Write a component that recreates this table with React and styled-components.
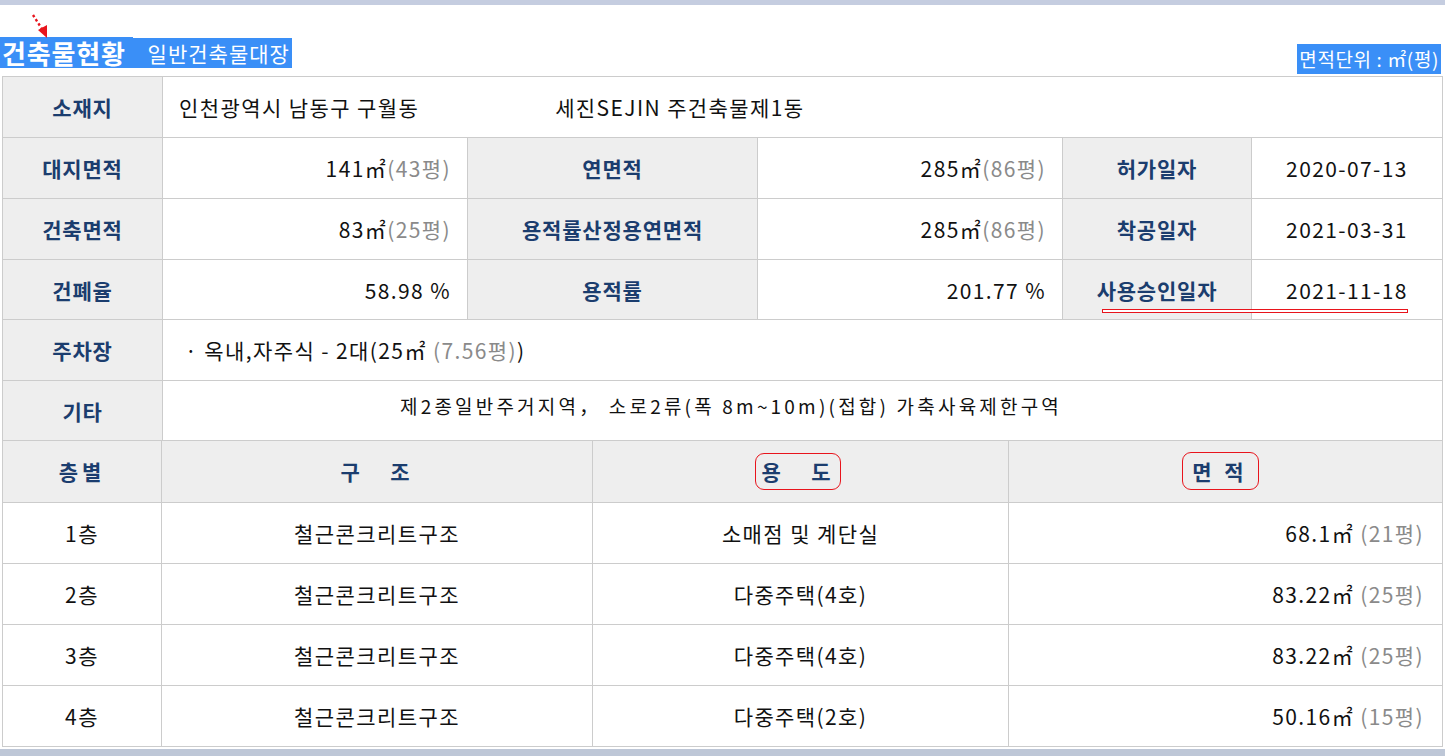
import styled, { createGlobalStyle } from 'styled-components';

const GlobalStyle = createGlobalStyle`
    html, body {
        margin: 0;
        padding: 0;
        background: #fff;
    }
    body {
        font-family: 'Noto Sans CJK KR', 'Noto Sans', sans-serif;
        color: #111;
    }
`

const info = [
    ['대지면적', ['141㎡', '(43평)'], '연면적', ['285㎡', '(86평)'], '허가일자', '2020-07-13', 61],
    ['건축면적', ['83㎡', '(25평)'], '용적률산정용연면적', ['285㎡', '(86평)'], '착공일자', '2021-03-31', 61],
    ['건폐율', ['58.98 %', ''], '용적률', ['201.77 %', ''], '사용승인일자', '2021-11-18', 60],
]

const floors = [
    ['1층', '철근콘크리트구조', '소매점 및 계단실', '68.1㎡', '(21평)'],
    ['2층', '철근콘크리트구조', '다중주택(4호)', '83.22㎡', '(25평)'],
    ['3층', '철근콘크리트구조', '다중주택(4호)', '83.22㎡', '(25평)'],
    ['4층', '철근콘크리트구조', '다중주택(2호)', '50.16㎡', '(15평)'],
]

export default function App() {
    return (
        <Page>
            <GlobalStyle />
            <TopBar />
            <Header>
                <TitleWrap>
                    <Arrow width="20" height="28" viewBox="0 0 20 28">
                        <line x1="3" y1="2" x2="12" y2="16" stroke="#e8141c" strokeWidth="2.4" strokeDasharray="2.5 2.5" />
                        <polygon points="8,17 17,12 17,25" fill="#e8141c" />
                    </Arrow>
                    <MainTitle>건축물현황</MainTitle>
                    <SubTitle>일반건축물대장</SubTitle>
                </TitleWrap>
                <Unit>면적단위 : ㎡(평)</Unit>
            </Header>

            <Table>
                <colgroup>
                    <col style={{ width: 160 }} />
                    <col style={{ width: 305 }} />
                    <col style={{ width: 290 }} />
                    <col style={{ width: 305 }} />
                    <col style={{ width: 189 }} />
                    <col style={{ width: 191 }} />
                </colgroup>
                <tbody>
                    <Row $h={61}>
                        <Label>소재지</Label>
                        <Value colSpan={5} $align="left">
                            인천광역시 남동구 구월동
                            <Gap>세진SEJIN 주건축물제1동</Gap>
                        </Value>
                    </Row>
                    {info.map(row => (
                        <Row key={row[0]} $h={row[6]}>
                            <Label>{row[0]}</Label>
                            <Value $align="right">{row[1][0]}<Gray>{row[1][1]}</Gray></Value>
                            <Label>{row[2]}</Label>
                            <Value $align="right">{row[3][0]}<Gray>{row[3][1]}</Gray></Value>
                            <Label>{row[4]}</Label>
                            <Value $align="center" $marked={row[4] === '사용승인일자'}>
                                {row[5]}
                                {row[4] === '사용승인일자' && <UnderMark />}
                            </Value>
                        </Row>
                    ))}
                    <Row $h={61}>
                        <Label>주차장</Label>
                        <Value colSpan={5} $align="left" $pad="22px">
                            · 옥내,자주식 - 2대(25㎡ <Gray>(7.56평)</Gray>)
                        </Value>
                    </Row>
                    <Row $h={60}>
                        <Label>기타</Label>
                        <EtcCell colSpan={5}>
                            제2종일반주거지역， 소로2류(폭 8m~10m)(접합) 가축사육제한구역
                        </EtcCell>
                    </Row>
                </tbody>
            </Table>

            <FloorTable>
                <colgroup>
                    <col style={{ width: 159 }} />
                    <col style={{ width: 431 }} />
                    <col style={{ width: 416 }} />
                    <col style={{ width: 434 }} />
                </colgroup>
                <tbody>
                    <Row $h={61}>
                        <HeadCell>층별</HeadCell>
                        <HeadCell>구&nbsp;&nbsp;&nbsp;조</HeadCell>
                        <HeadCell>
                            <Circled $w={86} $h={37} $x={-5} $y={-2}>용&nbsp;&nbsp;&nbsp;도</Circled>
                        </HeadCell>
                        <HeadCell>
                            <Circled $w={77} $h={38} $x={-11} $y={-4}>면&nbsp;적</Circled>
                        </HeadCell>
                    </Row>
                    {floors.map(f => (
                        <Row key={f[0]} $h={61}>
                            <Value $align="center">{f[0]}</Value>
                            <Value $align="center">{f[1]}</Value>
                            <Value $align="center">{f[2]}</Value>
                            <Value $align="right" $pad="18px">{f[3]} <Gray>{f[4]}</Gray></Value>
                        </Row>
                    ))}
                </tbody>
            </FloorTable>

            <BottomBar />
        </Page>
    )
};

const Page = styled.div`
    width: 1445px;
    height: 756px;
    overflow: hidden;
    display: flex;
    flex-direction: column;
`
const TopBar = styled.div`
    height: 5px;
    background-color: #c5cde0;
    flex-shrink: 0;
`
const Header = styled.div`
    display: flex;
    justify-content: space-between;
    align-items: flex-end;
    height: 69px;
    margin-bottom: 2px;
    padding-right: 4px;
`
const TitleWrap = styled.div`
    position: relative;
    display: flex;
    align-items: flex-end;
    margin-bottom: 6px;
`
const Arrow = styled.svg`
    position: absolute;
    left: 30px;
    top: -24px;
`
const MainTitle = styled.span`
    display: inline-block;
    height: 31px;
    line-height: 31px;
    padding: 0 7px 0 2px;
    background-color: #3a8ff7;
    color: #fff;
    font-size: 26px;
    font-weight: 700;
    letter-spacing: 0.8px;
`
const SubTitle = styled.span`
    display: inline-block;
    height: 30px;
    line-height: 30px;
    padding: 0 2px 0 15px;
    background-color: #3a8ff7;
    color: #fff;
    font-size: 21px;
    letter-spacing: 1px;
`
const Unit = styled.span`
    display: inline-block;
    height: 30px;
    line-height: 30px;
    padding: 0 2px;
    background-color: #3a8ff7;
    color: #fff;
    font-size: 19px;
    letter-spacing: 0.6px;
`
const Table = styled.table`
    margin-left: 2px;
    width: 1441px;
    table-layout: fixed;
    border-collapse: collapse;
    border: 1px solid #cccccc;

    td {
        border: 1px solid #cccccc;
        box-sizing: border-box;
    }
`
const FloorTable = styled(Table)`
    border-top: none;

    tr:first-child td {
        border-top: none;
    }
`
const Row = styled.tr`
    td {
        height: ${p => p.$h}px;
    }
`
const Label = styled.td`
    background-color: #eeeeee;
    color: #1b3d6e;
    font-size: 21px;
    font-weight: 700;
    letter-spacing: 0.8px;
    text-align: center;
    padding: 0;
`
const HeadCell = styled(Label)`
    font-weight: 600;
    letter-spacing: 4px;
`
const Value = styled.td`
    position: ${p => (p.$marked ? 'relative' : 'static')};
    font-size: 21px;
    letter-spacing: 1.4px;
    color: #111;
    text-align: ${p => p.$align};
    padding: 0 ${p => p.$pad || '16px'};
    white-space: nowrap;
`
const EtcCell = styled.td`
    font-size: 19px;
    letter-spacing: 3.2px;
    color: #111;
    text-align: center;
    padding: 0 143px 10px 0;
    white-space: nowrap;
`
const Gray = styled.span`
    color: #8a8a8a;
`
const Gap = styled.span`
    margin-left: 136px;
`
const UnderMark = styled.span`
    position: absolute;
    right: 34px;
    bottom: 6px;
    width: 306px;
    height: 4px;
    border: 1px solid #e8141c;
    box-sizing: border-box;
    background: #fff;
    z-index: 2;
`
const Circled = styled.span`
    display: inline-flex;
    align-items: center;
    justify-content: center;
    width: ${p => p.$w}px;
    height: ${p => p.$h}px;
    margin-left: ${p => p.$x}px;
    vertical-align: ${p => p.$y}px;
    border: 1px solid #e8141c;
    border-radius: 9px;
    box-sizing: border-box;
`
const BottomBar = styled.div`
    margin-top: auto;
    height: 7px;
    background-color: #bec7d7;
    flex-shrink: 0;
`
